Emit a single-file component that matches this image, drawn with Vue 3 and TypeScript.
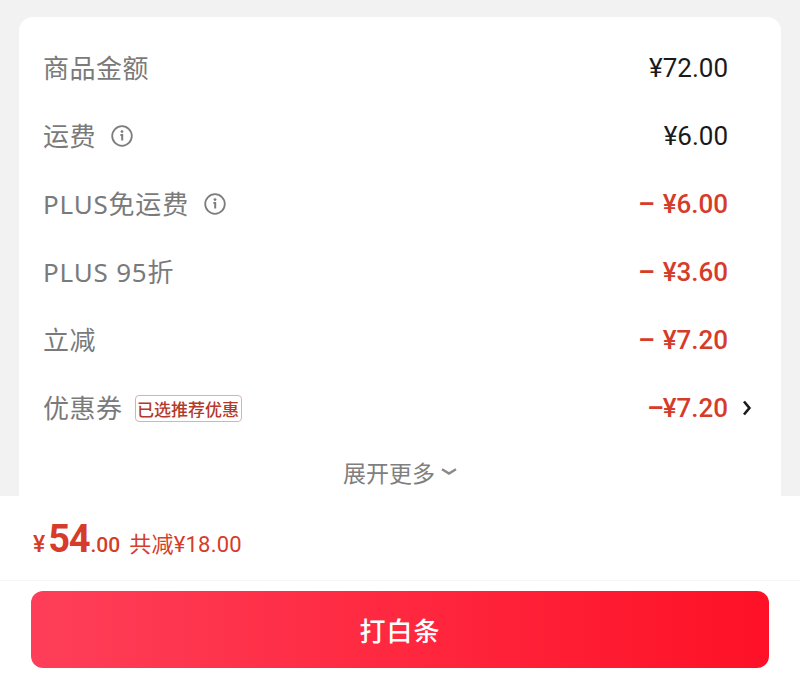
<script setup lang="ts">
interface Row {
  label: string
  amount: string
  sign?: string
  info?: boolean
  tag?: string
  arrow?: boolean
  latin?: boolean
}
const rows: Row[] = [
  { label: '商品金额', amount: '¥72.00' },
  { label: '运费', amount: '¥6.00', info: true },
  { label: 'PLUS免运费', amount: '¥6.00', sign: 'wide', info: true, latin: true },
  { label: 'PLUS 95折', amount: '¥3.60', sign: 'wide', latin: true },
  { label: '立减', amount: '¥7.20', sign: 'wide' },
  { label: '优惠券', amount: '¥7.20', sign: 'tight', tag: '已选推荐优惠', arrow: true },
]
</script>

<template>
  <div class="page">
    <section class="card">
      <div v-for="row in rows" :key="row.label" class="row">
        <div class="left">
          <span class="label" :class="{ latin: row.latin }">{{ row.label }}</span>
          <svg v-if="row.info" class="info" viewBox="0 0 22 22" width="22" height="22" fill="none">
            <circle cx="11" cy="11" r="9.8" stroke="#7d7d7d" stroke-width="1.8" />
            <circle cx="11" cy="6.6" r="1.4" fill="#7d7d7d" />
            <path d="M9.4 10H11.2V15.6" stroke="#7d7d7d" stroke-width="2" />
          </svg>
          <span v-if="row.tag" class="tag">{{ row.tag }}</span>
        </div>
        <div class="right">
          <span class="amount" :class="{ red: row.sign }">
            <span v-if="row.sign" class="sign" :class="row.sign">–</span>{{ row.amount }}
          </span>
          <svg v-if="row.arrow" class="arrow" viewBox="0 0 10 16" width="10" height="16" fill="none">
            <path d="M2 1.5L7.4 8L2 14.5" stroke="#1a1a1a" stroke-width="2.6" />
          </svg>
        </div>
      </div>
      <div class="more">
        <span>展开更多</span>
        <svg viewBox="0 0 16 8" width="16" height="8" fill="none">
          <path d="M1 1.2L8 5.6L15 1.2" stroke="#8a8a8a" stroke-width="2.4" />
        </svg>
      </div>
    </section>
    <footer class="footer">
      <div class="total">
        <span class="yen">¥</span><span class="big">54</span><span class="cents">.00</span>
        <span class="saved">共减¥18.00</span>
      </div>
      <div class="action">
        <button class="pay" type="button">打白条</button>
      </div>
    </footer>
  </div>
</template>

<style>
html, body { margin: 0; padding: 0; background: #f2f2f2; }
</style>

<style scoped>
.page {
  width: 800px;
  height: 692px;
  overflow: hidden;
  display: flex;
  flex-direction: column;
  background: #f2f2f2;
  font-family: Roboto, "Noto Sans CJK SC", sans-serif;
}
.card {
  margin: 17px 19px 0;
  height: 479px;
  box-sizing: border-box;
  padding: 17px 52px 0 24px;
  background: #fff;
  border-radius: 14px 14px 0 0;
}
.row {
  height: 68px;
  display: flex;
  align-items: center;
  justify-content: space-between;
}
.left { display: flex; align-items: center; }
.label {
  font-family: "Noto Sans", "Noto Sans CJK SC", sans-serif;
  font-size: 26px;
  color: #7a7a7a;
  line-height: 34px;
  letter-spacing: 0.5px;
  white-space: nowrap;
}
.label.latin { letter-spacing: 0.8px; }
.info { margin-left: 15px; }
.tag {
  margin-left: 12px;
  height: 27px;
  box-sizing: border-box;
  width: 107px;
  display: flex;
  align-items: center;
  justify-content: center;
  border: 1px solid #d6b4ab;
  border-radius: 4px;
  font-size: 17px;
  font-weight: 500;
  color: #b5392a;
  white-space: nowrap;
}
.right { position: relative; display: flex; align-items: center; left: -1px; }
.amount {
  font-size: 26px;
  font-weight: 400;
  color: #1a1a1a;
  line-height: 34px;
  white-space: nowrap;
}
.amount.red { color: #d63c2a; font-weight: 500; }
.sign { font-weight: 700; }
.sign.wide { margin-right: 8px; }
.sign.tight { margin-right: -1px; }
.arrow { position: absolute; left: 100%; margin-left: 14px; }
.more {
  margin-right: -28px;
  height: 62px;
  padding-bottom: 2px;
  box-sizing: border-box;
  display: flex;
  align-items: center;
  justify-content: center;
  gap: 6px;
  font-size: 23px;
  color: #7f7f7f;
}
.footer { background: #fff; flex: 1; }
.total {
  height: 85px;
  box-sizing: border-box;
  padding: 0 0 0 33px;
  display: flex;
  align-items: baseline;
  line-height: 86px;
  color: #d63c2a;
  border-bottom: 1px solid #f7f7f7;
}
.yen { font-size: 23px; font-weight: 500; margin-right: 3px; }
.big { font-size: 38px; font-weight: 700; letter-spacing: -1.2px; }
.cents { font-size: 21px; font-weight: 500; margin-left: 1px; }
.saved { font-size: 22px; font-weight: 400; margin-left: 9px; letter-spacing: 0.25px; }
.action { padding: 10px 31px 0; }
.pay {
  display: block;
  width: 100%;
  height: 77px;
  border: 0;
  border-radius: 12px;
  background: linear-gradient(90deg, #fe3f59 0%, #fe1126 100%);
  color: #fff;
  font-family: inherit;
  font-size: 26px;
  font-weight: 500;
  letter-spacing: 1px;
}
</style>
